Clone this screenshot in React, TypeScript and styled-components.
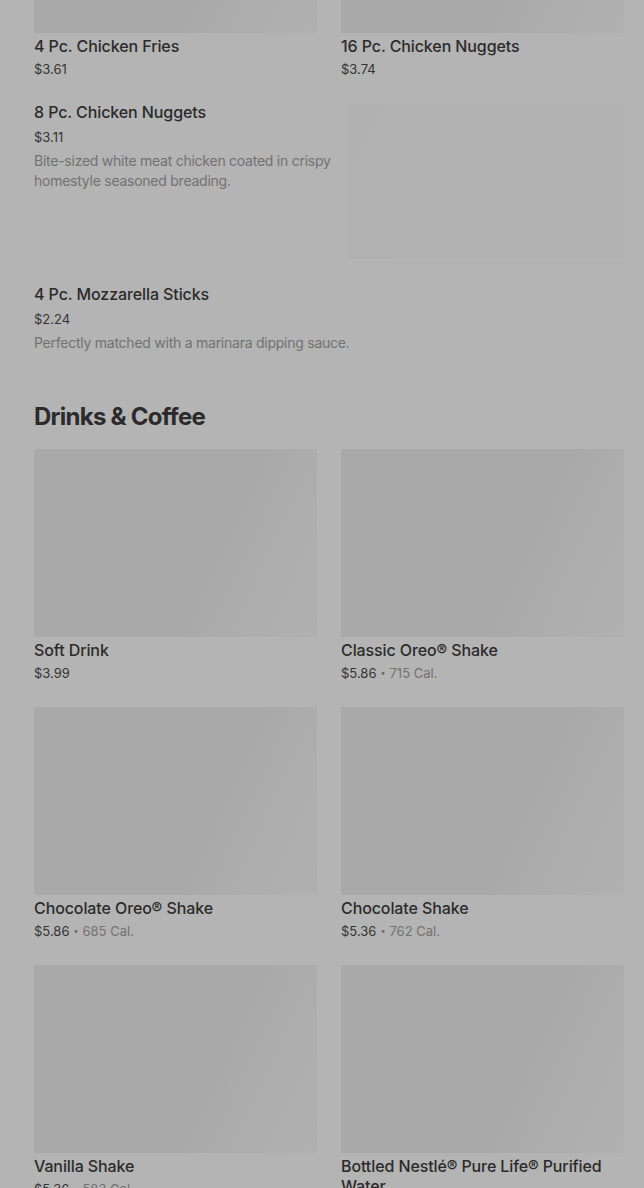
import React from "react";
import styled, { createGlobalStyle } from "styled-components";

const Global = createGlobalStyle`
  html, body { margin: 0; padding: 0; background: #b4b4b4; }
  body { font-family: Inter, "Noto Sans", sans-serif; -webkit-font-smoothing: antialiased; }
  * { box-sizing: border-box; }
`;

const Page = styled.div`
  width: 644px;
  height: 1188px;
  overflow: hidden;
  background: #b4b4b4;
  padding: 0 20px 0 34px;
`;

const Scroller = styled.div`
  margin-top: -155px;
  display: flex;
  flex-direction: column;
`;

const Grid = styled.div`
  display: grid;
  grid-template-columns: 283px 283px;
  column-gap: 24px;
  row-gap: 25px;
`;

const Card = styled.div`
  display: flex;
  flex-direction: column;
`;

const Thumb = styled.div<{ $h: number }>`
  height: ${(p) => p.$h}px;
  background: linear-gradient(115deg, #a9a9a9 0%, #a9a9a9 62%, #adadad 78%, #b0b0b0 100%);
`;

const Title = styled.div<{ $mt?: number }>`
  margin-top: ${(p) => p.$mt ?? 3}px;
  font-size: 16px;
  line-height: 20px;
  font-weight: 500;
  color: #2b2b2b;
  letter-spacing: -0.1px;
`;

const Meta = styled.div<{ $mt?: number }>`
  margin-top: ${(p) => p.$mt ?? 4}px;
  font-size: 13px;
  line-height: 18px;
  color: #353535;
  display: flex;
  align-items: center;
`;

const Dot = styled.span`
  margin: 0 4px;
  color: #6a6a6a;
  font-size: 9px;
`;

const Cal = styled.span`
  color: #727272;
`;

const Desc = styled.div`
  margin-top: 5px;
  font-size: 14px;
  line-height: 20px;
  color: #727272;
  letter-spacing: -0.25px;
`;

const ListRow = styled.div<{ $mt: number }>`
  margin-top: ${(p) => p.$mt}px;
  display: flex;
  gap: 8px;
  align-items: flex-start;
`;

const ListText = styled.div`
  flex: 1;
  display: flex;
  flex-direction: column;
  margin-top: -2px;
`;

const SideThumb = styled.div`
  width: 276px;
  height: 155px;
  flex-shrink: 0;
  background: linear-gradient(115deg, #b1b1b1 0%, #b2b2b2 100%);
`;

const Heading = styled.h2`
  margin: 48px 0 16px;
  font-size: 24px;
  line-height: 32px;
  font-weight: 700;
  color: #2b2b2b;
  letter-spacing: -0.75px;
`;

type Item = { name: string; price: string; cal?: string };

const GridCard = ({ item }: { item: Item }) => (
  <Card>
    <Thumb $h={188} />
    <Title>{item.name}</Title>
    <Meta>
      {item.price}
      {item.cal && (
        <>
          <Dot>•</Dot>
          <Cal>{item.cal}</Cal>
        </>
      )}
    </Meta>
  </Card>
);

const topItems: Item[] = [
  { name: "4 Pc. Chicken Fries", price: "$3.61" },
  { name: "16 Pc. Chicken Nuggets", price: "$3.74" },
];

const drinks: Item[] = [
  { name: "Soft Drink", price: "$3.99" },
  { name: "Classic Oreo® Shake", price: "$5.86", cal: "715 Cal." },
  { name: "Chocolate Oreo® Shake", price: "$5.86", cal: "685 Cal." },
  { name: "Chocolate Shake", price: "$5.36", cal: "762 Cal." },
  { name: "Vanilla Shake", price: "$5.36", cal: "583 Cal." },
  { name: "Bottled Nestlé® Pure Life® Purified Water", price: "$2.49", cal: "0 Cal." },
];

export default function App() {
  return (
    <Page>
      <Global />
      <Scroller>
        <Grid>
          {topItems.map((it) => (
            <GridCard key={it.name} item={it} />
          ))}
        </Grid>
        <ListRow $mt={26}>
          <ListText>
            <Title $mt={0}>8 Pc. Chicken Nuggets</Title>
            <Meta $mt={6}>$3.11</Meta>
            <Desc>Bite-sized white meat chicken coated in crispy homestyle seasoned breading.</Desc>
          </ListText>
          <SideThumb />
        </ListRow>
        <ListRow $mt={27}>
          <ListText>
            <Title $mt={0}>4 Pc. Mozzarella Sticks</Title>
            <Meta $mt={6}>$2.24</Meta>
            <Desc>Perfectly matched with a marinara dipping sauce.</Desc>
          </ListText>
        </ListRow>
        <Heading>Drinks &amp; Coffee</Heading>
        <Grid>
          {drinks.map((it) => (
            <GridCard key={it.name} item={it} />
          ))}
        </Grid>
      </Scroller>
    </Page>
  );
}
